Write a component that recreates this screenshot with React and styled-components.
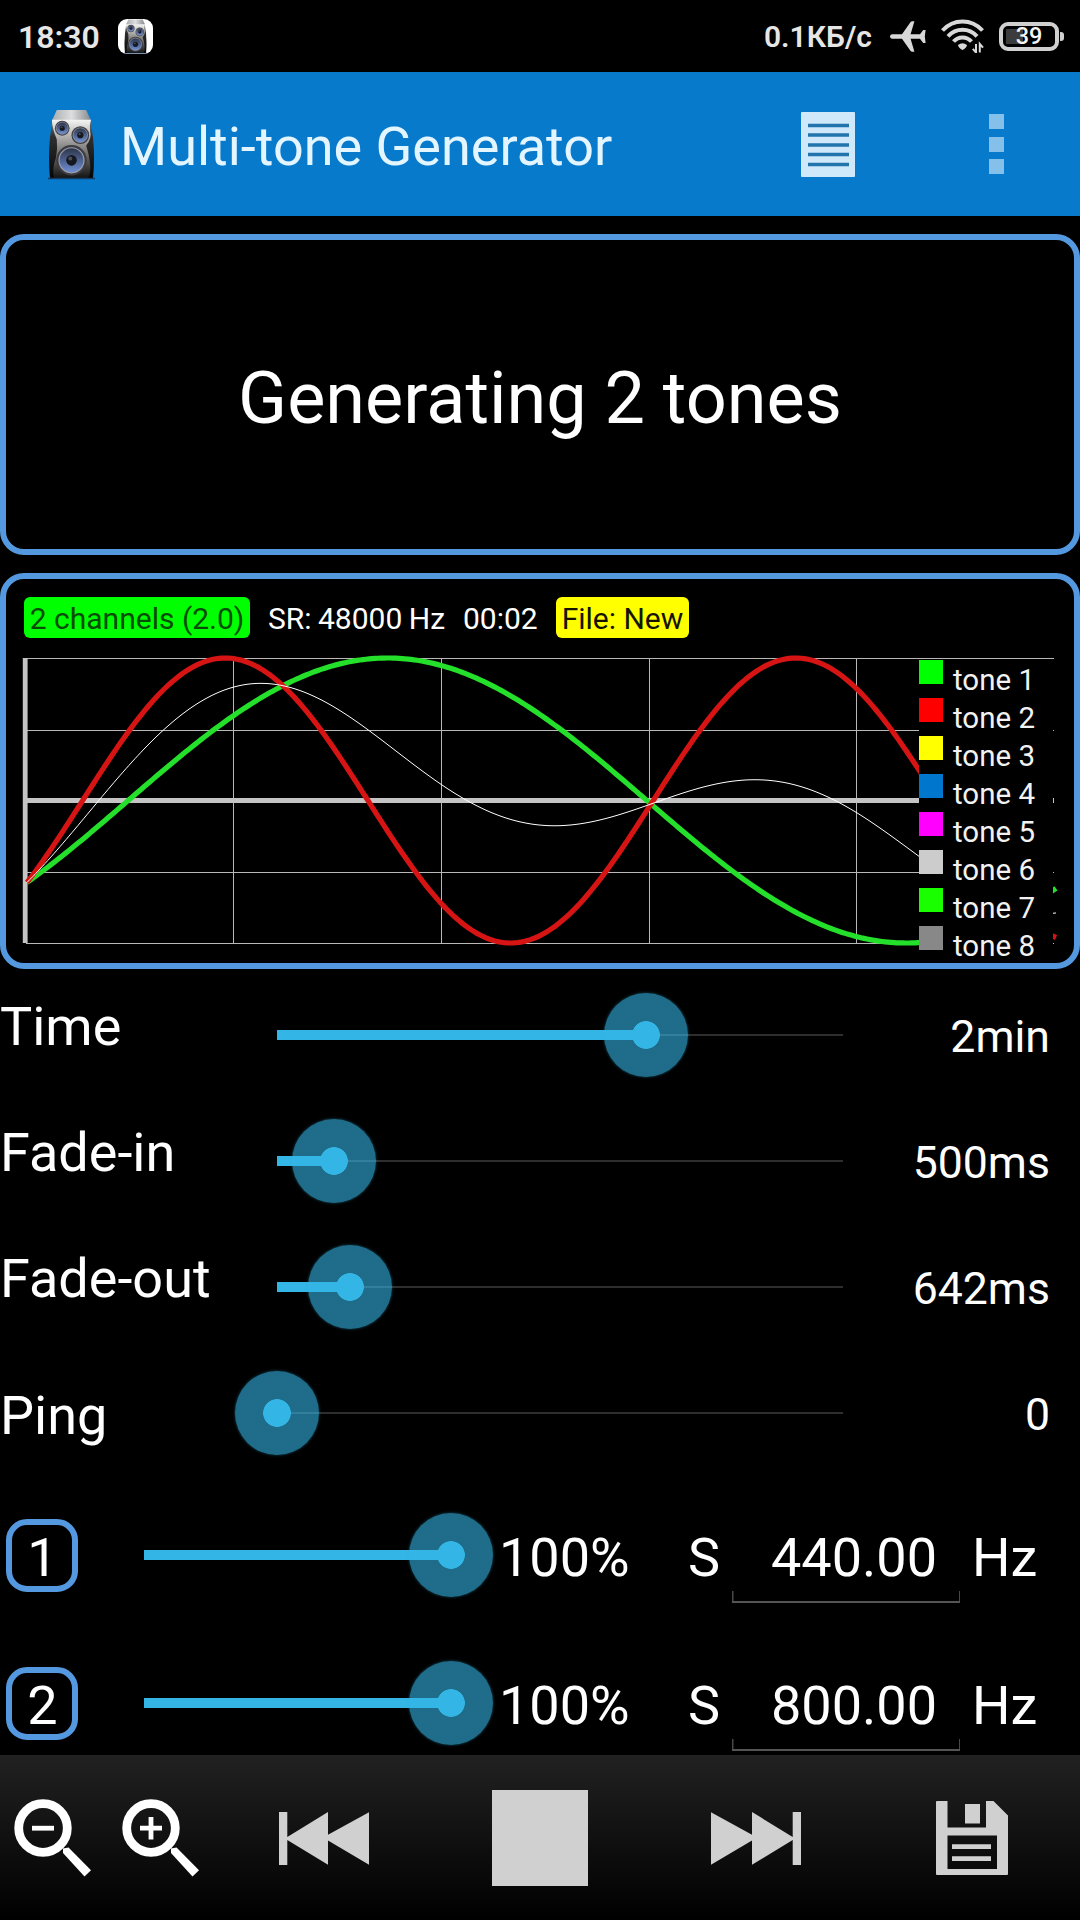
import React, { useState } from "react";
import styled, { createGlobalStyle, css } from "styled-components";

const GlobalStyle = createGlobalStyle`
  * {
    box-sizing: border-box;
  }

  body {
    margin: 0;
    background: #000000;
    color: #ffffff;
    font-family: Roboto, "Noto Sans", sans-serif;
  }

  svg {
    display: block;
    flex: none;
  }
`;

const Screen = styled.main`
  display: flex;
  flex-direction: column;
  width: 1080px;
  height: 1920px;
  overflow: hidden;
  background: #000000;
`;

const StatusBar = styled.header`
  display: flex;
  align-items: center;
  flex: none;
  height: 72px;
  padding: 0 17px 0 18px;
  color: #e6e6e6;
`;

const Clock = styled.span`
  width: 100px;
  padding-top: 1px;
  font-size: 32px;
  font-weight: 600;
  line-height: 72px;
`;

const NotificationIcon = styled.span`
  display: flex;
  justify-content: center;
  width: 35px;
  height: 35px;
  border-radius: 9px;
  background: #ffffff;
  overflow: hidden;
`;

const NetSpeed = styled.span`
  margin-left: auto;
  margin-right: 18px;
  padding-top: 1px;
  font-size: 30px;
  font-weight: 600;
  line-height: 72px;
`;

const StatusIcons = styled.div`
  display: flex;
  align-items: center;
  gap: 15px;
`;

const Battery = styled.span`
  position: relative;
  display: flex;
  align-items: center;
  justify-content: center;
  width: 60px;
  height: 29px;
  margin-left: 14px;
  margin-right: 4px;
  border: 4px solid #d0d0d0;
  border-radius: 9px;
  background: linear-gradient(90deg, #3c3c3c, #3c3c3c) 3px 3px / 17px 15px
    no-repeat;
  color: #f4f4f4;
  font-size: 23.5px;
  font-weight: 500;

  &::after {
    content: "";
    position: absolute;
    right: -9px;
    width: 4px;
    height: 9px;
    border-radius: 0 3px 3px 0;
    background: #d0d0d0;
  }
`;

const AppBar = styled.nav`
  display: flex;
  align-items: center;
  flex: none;
  height: 144px;
  padding: 0 76px 0 48px;
  background: #087acc;
`;

const Title = styled.h1`
  flex: 1;
  margin: 5px 0 0 25px;
  color: #e3f6ff;
  font-size: 54px;
  font-weight: 400;
  line-height: 64px;
`;

const DotColumn = styled.div`
  display: flex;
  flex-direction: column;
  gap: 7.5px;
  margin-left: 134px;

  span {
    width: 15px;
    height: 15px;
    background: #85c0ea;
  }
`;

const Panel = styled.section`
  flex: none;
  border: 6px solid #5499e0;
  border-radius: 24px;
`;

const MessagePanel = styled(Panel)`
  display: flex;
  align-items: center;
  justify-content: center;
  height: 321px;
  margin-top: 18px;
  padding-top: 7px;
  font-size: 72px;
`;

const ChartPanel = styled(Panel)`
  height: 396px;
  margin-top: 18px;
  padding: 18px 0 0 18px;
`;

const InfoRow = styled.div`
  display: flex;
  height: 41px;
  font-size: 30px;
  line-height: 43px;
`;

const Badge = styled.span`
  width: ${({ $width }) => $width}px;
  border-radius: 6px;
  background: ${({ $bg }) => $bg};
  color: ${({ $color }) => $color};
  text-align: center;
  white-space: nowrap;
`;

const InfoText = styled.span`
  width: ${({ $width }) => $width}px;
  padding-left: 18px;
  white-space: nowrap;
  word-spacing: -1px;
`;

const ChartArea = styled.div`
  position: relative;
  height: 310px;
  margin-top: 17px;

  svg {
    overflow: visible;
  }
`;

const Legend = styled.ul`
  position: absolute;
  top: 5px;
  left: 895px;
  width: 134px;
  height: 303px;
  margin: 0;
  padding: 0;
  list-style: none;
  background: #000000;
`;

const LegendItem = styled.li`
  display: flex;
  height: 38px;
  color: #f2f2f2;
  font-size: 29.5px;
  line-height: 38px;

  &::before {
    content: "";
    width: 24px;
    height: 24px;
    margin-right: 10px;
    background: ${({ $color }) => $color};
  }

  span {
    padding-top: 1px;
  }
`;

const Settings = styled.section`
  flex: none;
  padding-top: 3px;
`;

const SettingRow = styled.div`
  display: grid;
  grid-template-columns: 277px 566px 1fr;
  align-items: center;
  height: 126px;
  padding-right: 30px;
`;

const SettingLabel = styled.label`
  padding-bottom: ${({ $low }) => ($low ? 0 : 16)}px;
  padding-top: ${({ $low }) => ($low ? 5 : 0)}px;
  font-size: 54px;
  line-height: 64px;
`;

const SettingValue = styled.output`
  padding-top: 3px;
  font-size: 44.6px;
  line-height: 54px;
  text-align: right;
`;

const Track = styled.div`
  position: relative;
  height: 84px;
  background: linear-gradient(#2e2e2e, #2e2e2e) 0 41px / 100% 2px no-repeat;
`;

const Fill = styled.div`
  position: absolute;
  top: 37px;
  left: 0;
  height: 10px;
  background: #33b5e5;
`;

const Thumb = styled.div`
  position: absolute;
  top: 0;
  width: 84px;
  height: 84px;
  margin-left: -42px;
  border-radius: 50%;
  background: radial-gradient(
    circle,
    #33b5e5 13.5px,
    rgba(51, 181, 229, 0.6) 14.2px
  );
  box-shadow: 0 0 3px rgba(51, 181, 229, 0.45);
`;

const Tones = styled.section`
  flex: 1;
  padding-top: 5px;
  overflow: hidden;
`;

const ToneRow = styled.div`
  display: grid;
  grid-template-columns: 144px 307px 234px 47px 228px 1fr;
  align-items: center;
  height: 148px;
  font-size: 54px;
  line-height: 64px;
`;

const ToneButton = styled.button`
  width: 72px;
  height: 73px;
  margin-left: 6px;
  padding: 0 0 0 1px;
  border: 6px solid #5499e0;
  border-radius: 21px;
  background: none;
  color: #ffffff;
  font: inherit;
  line-height: 66px;
`;

const textOffset = css`
  padding-top: 6px;
`;

const Volume = styled.span`
  ${textOffset}
  padding-left: 48px;
`;

const WaveType = styled.span`
  ${textOffset}
  padding-left: 3px;
`;

const FrequencyInput = styled.div`
  align-self: start;
  height: 122px;
  padding: 45px 23px 0 0;
  background: linear-gradient(#555555, #555555) 0 100% / 100% 2px no-repeat,
    linear-gradient(#484848, #484848) 0 100% / 1.5px 12px no-repeat,
    linear-gradient(#484848, #484848) 100% 100% / 1.5px 12px no-repeat;
  text-align: right;
`;

const Unit = styled.span`
  ${textOffset}
  padding-left: 12px;
`;

const Toolbar = styled.footer`
  display: flex;
  flex: none;
  height: 165px;
  padding: 35px 72px 0 14px;
  background: linear-gradient(#212121, #000000);
`;

const ToolButton = styled.button`
  display: flex;
  align-items: center;
  height: 96px;
  margin-left: ${({ $gap = 0 }) => $gap}px;
  padding: 0;
  border: 0;
  background: none;
`;

const StopShape = styled.span`
  width: 96px;
  height: 96px;
  background: #d0d0d0;
`;

const TONE_COLORS = [
  "#00ff00",
  "#ff0000",
  "#ffff00",
  "#0077cc",
  "#ff00ff",
  "#cccccc",
  "#1aff00",
  "#888888",
];

const CHART = { left: 3, right: 1032, mid: 145.5, amp: 142.5 };
const PERIODS = { green: 1037.5, red: 570.6 };
const PHASE = 0.6125;

const wave = (x, period) =>
  Math.sin(((x - CHART.left) / period) * Math.PI * 2 - PHASE);

const toPath = (fn) => {
  const points = [];
  for (let x = CHART.left; x <= CHART.right; x += 3) {
    points.push(`${x},${(CHART.mid - CHART.amp * fn(x)).toFixed(2)}`);
  }
  return `M${points.join("L")}`;
};

const Speaker = ({ width, height, id }) => (
  <svg width={width} height={height} viewBox="0 0 48 72" preserveAspectRatio="none">
    <defs>
      <linearGradient id={`${id}-body`} x1="0" y1="0" x2="0" y2="1">
        <stop offset="0" stopColor="#f4f4f4" />
        <stop offset="0.45" stopColor="#8c8b89" />
        <stop offset="1" stopColor="#141414" />
      </linearGradient>
      <linearGradient id={`${id}-side`} x1="0" y1="0" x2="0" y2="1">
        <stop offset="0" stopColor="#77818a" />
        <stop offset="0.3" stopColor="#303030" />
        <stop offset="1" stopColor="#050505" />
      </linearGradient>
      <linearGradient id={`${id}-top`} x1="0" y1="0" x2="1" y2="0">
        <stop offset="0" stopColor="#a9abad" />
        <stop offset="0.5" stopColor="#dedede" />
        <stop offset="1" stopColor="#85898d" />
      </linearGradient>
      <linearGradient id={`${id}-cone`} x1="0" y1="0" x2="0" y2="1">
        <stop offset="0" stopColor="#2c3346" />
        <stop offset="1" stopColor="#7090d6" />
      </linearGradient>
    </defs>
    <path d="M5 10 L43 10 Q49 39 46 70 L2 70 Q-1 39 5 10Z" fill={`url(#${id}-side)`} />
    <path d="M9 1 L39 1 L44 12 L4 12Z" fill={`url(#${id}-top)`} />
    <path
      d="M4 11 L44 11 Q42 16 43 22 Q45 30 39 37 Q42 46 43 55 Q44 64 41 70 L6 70 Q4 60 8 50 Q10 40 9 31 Q4 19 4 11Z"
      fill={`url(#${id}-body)`}
    />
    {[
      [14.5, 19.5, 7.5],
      [33, 26.5, 9],
      [24, 52, 15.5],
    ].map(([cx, cy, r]) => (
      <g key={cx}>
        <circle cx={cx} cy={cy} r={r} fill="#3c3c42" />
        <circle cx={cx} cy={cy} r={r * 0.82} fill={`url(#${id}-cone)`} stroke="#9ba0ae" strokeWidth={r * 0.08} />
        <circle cx={cx} cy={cy} r={r * 0.35} fill="#15181f" />
        <circle cx={cx - r * 0.08} cy={cy - r * 0.12} r={r * 0.13} fill="#4b4f58" />
      </g>
    ))}
    <path d="M0 70.5 H48" stroke="#123c66" strokeWidth="1.5" />
  </svg>
);

const Airplane = () => (
  <svg width="36" height="31" viewBox="0 0 36 31">
    <path
      d="M2 13.2H12L20.6 1Q21.2 .2 22.2 .2H24.4L20.6 13.2H30L33.2 9H35.6L34.8 15.5L35.6 22H33.2L30 17.8H20.6L24.4 30.8H22.2Q21.2 30.8 20.6 30L12 17.8H2Q0 17.5 0 15.5T2 13.2Z"
      fill="#d8d8d8"
    />
  </svg>
);

const WifiIcon = () => (
  <svg width="44" height="34" viewBox="0 0 44 34">
    <g fill="none" stroke="#d8d8d8" strokeWidth="4">
      <path d="M1.5 11.5C12.5 -0.5 30.5 -0.5 41.5 11.5" />
      <path d="M7 17.3C15 8.5 28 8.5 36 17.3" />
      <path d="M12.5 22.5C17.5 17 25.5 17 30.5 22.5" />
    </g>
    <path d="M17 26Q21.5 22.5 26 26Q25.5 29 21.5 31Q17.500 29 17 26Z" fill="#d8d8d8" />
    <path d="M35 25V33.5L31.8 29.8M38.8 33.5V25L42 28.7" fill="none" stroke="#d8d8d8" strokeWidth="2" />
  </svg>
);

const DocumentIcon = () => (
  <svg width="54" height="65" viewBox="0 0 54 65">
    <rect width="54" height="65" rx="1" fill="#cfe9fb" />
    <path d="M7 13.5H48M7 23H48M7 33H48M7 42.5H48M7 52.5H48" stroke="#2274ad" strokeWidth="3.4" />
  </svg>
);

const Magnifier = ({ plus }) => (
  <svg width="77" height="78" viewBox="0 0 77 78">
    <circle cx="29" cy="29" r="24.3" fill="none" stroke="#ffffff" strokeWidth="8.8" />
    <path
      d="M49 54V49.500L54.500 48.500L77 71.200L70.500 77.500L49 54Z"
      fill="#ffffff"
    />
    <path d={plus ? "M18 29.2H40M29 18V40.4" : "M18 29.2H40"} stroke="#ffffff" strokeWidth="4.8" />
  </svg>
);

const SkipIcon = ({ next }) => (
  <svg width="90" height="53" viewBox="0 0 90 53">
    <path
      d="M0 0H8.3V25L49 0V22.8L90 .3V52.7L49 28.5V52.7L8.3 28V53H0Z"
      fill="#d0d0d0"
      transform={next ? "matrix(-1 0 0 1 90 0)" : undefined}
    />
  </svg>
);

const SaveIcon = () => (
  <svg width="72" height="74" viewBox="0 0 72 74">
    <path
      d="M1 0H11.5V26.5H50V0H57.500L72 14.500V73Q72 74 71 74H1Q0 74 0 73V1Q0 0 1 0ZM11.5 34.5V68H61V34.5Z"
      fill="#d0d0d0"
      fillRule="evenodd"
    />
    <rect x="29" y="3" width="15" height="19.5" fill="#d0d0d0" />
    <path d="M16 45.7H55M16 57.7H55" stroke="#d0d0d0" strokeWidth="4.8" />
  </svg>
);

const Slider = ({ value }) => (
  <Track>
    <Fill style={{ width: `${value}%` }} />
    <Thumb style={{ left: `${value}%` }} />
  </Track>
);

const WaveChart = () => (
  <ChartArea>
    <svg width="1034" height="310" viewBox="0 0 1034 310">
      <path
        d="M0 3.5H1030M0 75.5H1030M0 217.5H1030M2 288.5H1030M209.5 3V288M417.5 3V288M625.5 3V288M832.5 3V288"
        stroke="#b8b8b8"
        strokeWidth="1"
      />
      <path d="M1.2 3V288M0 145.5H1030" stroke="#c4c4c4" strokeWidth="4.8" />
      <g fill="none">
        <path d={toPath((x) => wave(x, PERIODS.green))} stroke="#24e02a" strokeWidth="5.2" />
        <path d={toPath((x) => wave(x, PERIODS.red))} stroke="#d71414" strokeWidth="5.2" />
        <path
          d={toPath((x) => (wave(x, PERIODS.green) + wave(x, PERIODS.red)) / 2)}
          stroke="#ffffff"
          strokeWidth="1"
        />
      </g>
    </svg>
    <Legend>
      {TONE_COLORS.map((color, i) => (
        <LegendItem key={color} $color={color}>
          <span>tone {i + 1}</span>
        </LegendItem>
      ))}
    </Legend>
  </ChartArea>
);

const settings = [
  { label: "Time", position: 65.2, value: "2min" },
  { label: "Fade-in", position: 10.1, value: "500ms" },
  { label: "Fade-out", position: 12.9, value: "642ms" },
  { label: "Ping", position: 0, value: "0", low: true },
];

const App = () => {
  const [tones] = useState([
    { id: 1, volume: 100, frequency: "440.00" },
    { id: 2, volume: 100, frequency: "800.00" },
  ]);

  return (
    <Screen>
      <GlobalStyle />
      <StatusBar>
        <Clock>18:30</Clock>
        <NotificationIcon>
          <Speaker width={23} height={35} id="notif" />
        </NotificationIcon>
        <NetSpeed>0.1КБ/с</NetSpeed>
        <StatusIcons>
          <Airplane />
          <WifiIcon />
        </StatusIcons>
        <Battery>39</Battery>
      </StatusBar>

      <AppBar>
        <Speaker width={47} height={71} id="logo" />
        <Title>Multi-tone Generator</Title>
        <DocumentIcon />
        <DotColumn>
          <span />
          <span />
          <span />
        </DotColumn>
      </AppBar>

      <MessagePanel>Generating 2 tones</MessagePanel>

      <ChartPanel>
        <InfoRow>
          <Badge $width={226} $bg="#00ff00" $color="#064d06">
            2 channels (2.0)
          </Badge>
          <InfoText $width={195}>SR: 48000 Hz</InfoText>
          <InfoText $width={111}>00:02</InfoText>
          <Badge $width={133} $bg="#ffff00" $color="#141400">
            File: New
          </Badge>
        </InfoRow>
        <WaveChart />
      </ChartPanel>

      <Settings>
        {settings.map(({ label, position, value, low }) => (
          <SettingRow key={label}>
            <SettingLabel $low={low}>{label}</SettingLabel>
            <Slider value={position} />
            <SettingValue>{value}</SettingValue>
          </SettingRow>
        ))}
      </Settings>

      <Tones>
        {tones.map(({ id, volume, frequency }) => (
          <ToneRow key={id}>
            <ToneButton>{id}</ToneButton>
            <Slider value={volume} />
            <Volume>{volume}%</Volume>
            <WaveType>S</WaveType>
            <FrequencyInput>{frequency}</FrequencyInput>
            <Unit>Hz</Unit>
          </ToneRow>
        ))}
      </Tones>

      <Toolbar>
        <ToolButton>
          <Magnifier />
        </ToolButton>
        <ToolButton $gap={31}>
          <Magnifier plus />
        </ToolButton>
        <ToolButton $gap={80}>
          <SkipIcon />
        </ToolButton>
        <ToolButton $gap={123}>
          <StopShape />
        </ToolButton>
        <ToolButton $gap={123}>
          <SkipIcon next />
        </ToolButton>
        <ToolButton $gap={135}>
          <SaveIcon />
        </ToolButton>
      </Toolbar>
    </Screen>
  );
};

export default App;
